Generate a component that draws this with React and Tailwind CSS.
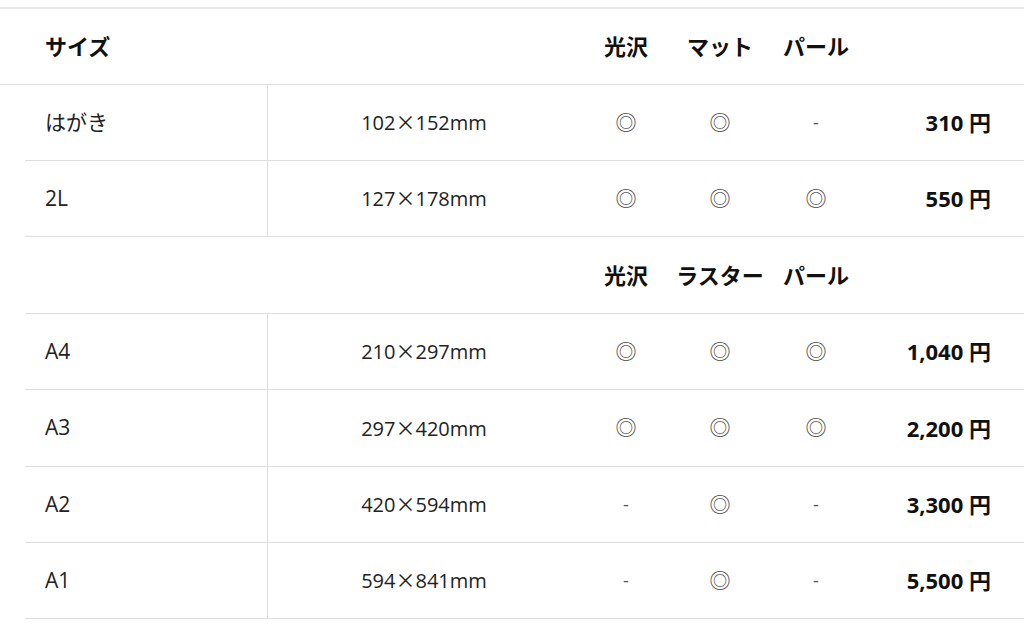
import React from "react";

const F = { fontFamily: '"Open Sans", "Noto Sans CJK JP", sans-serif' };

const cols = "grid grid-cols-[242px_313px_92px_96px_96px_1fr]";

function Mark({ v }) {
  if (v === "-") return <span className="text-[#555] text-[18px]">-</span>;
  return <span className="text-[#444] text-[21px]">◎</span>;
}

function Dim({ a, b }) {
  return (
    <span>
      {a}
      <span className="font-['Noto_Sans_CJK_JP'] text-[20px]">×</span>
      {b}mm
    </span>
  );
}

function Header({ labels, full, h }) {
  return (
    <div className={`${full ? "pl-[25px]" : "ml-[25px]"} ${cols} ${h} items-center border-b border-[#dedede]`}>
      <div className="pl-[20px] font-bold text-[22px] text-[#111]">{full ? "サイズ" : ""}</div>
      <div />
      {labels.map((l, i) => (
        <div key={i} className="text-center font-bold text-[22px] text-[#111] whitespace-nowrap">{l}</div>
      ))}
      <div />
    </div>
  );
}

function Row({ size, dim, m, price, h }) {
  return (
    <div className={`ml-[25px] ${cols} ${h} border-b border-[#dedede]`}>
      <div className="pl-[20px] flex items-center text-[21px] text-[#222]">{size}</div>
      <div className="border-l border-[#dedede] flex items-center justify-center text-[20px] text-[#222]">
        <Dim a={dim[0]} b={dim[1]} />
      </div>
      {m.map((v, i) => (
        <div key={i} className="flex items-center justify-center">
          <Mark v={v} />
        </div>
      ))}
      <div className="flex items-center justify-end pr-[33px] font-bold text-[22px] text-[#111] whitespace-nowrap">{price}</div>
    </div>
  );
}

export default function App() {
  return (
    <div className="w-[1024px] h-[626px] bg-white overflow-hidden" style={F}>
      <div className="pt-[7px]">
        <div className="border-t-2 border-[#e6e6e6]">
          <Header full labels={["光沢", "マット", "パール"]} h="h-[76px]" />
          <Row size="はがき" dim={["102", "152"]} m={["o", "o", "-"]} price="310 円" h="h-[76px]" />
          <Row size="2L" dim={["127", "178"]} m={["o", "o", "o"]} price="550 円" h="h-[76px]" />
          <Header labels={["光沢", "ラスター", "パール"]} h="h-[77px]" />
          <Row size="A4" dim={["210", "297"]} m={["o", "o", "o"]} price="1,040 円" h="h-[76px]" />
          <Row size="A3" dim={["297", "420"]} m={["o", "o", "o"]} price="2,200 円" h="h-[77px]" />
          <Row size="A2" dim={["420", "594"]} m={["-", "o", "-"]} price="3,300 円" h="h-[76px]" />
          <Row size="A1" dim={["594", "841"]} m={["-", "o", "-"]} price="5,500 円" h="h-[76px]" />
        </div>
      </div>
    </div>
  );
}
